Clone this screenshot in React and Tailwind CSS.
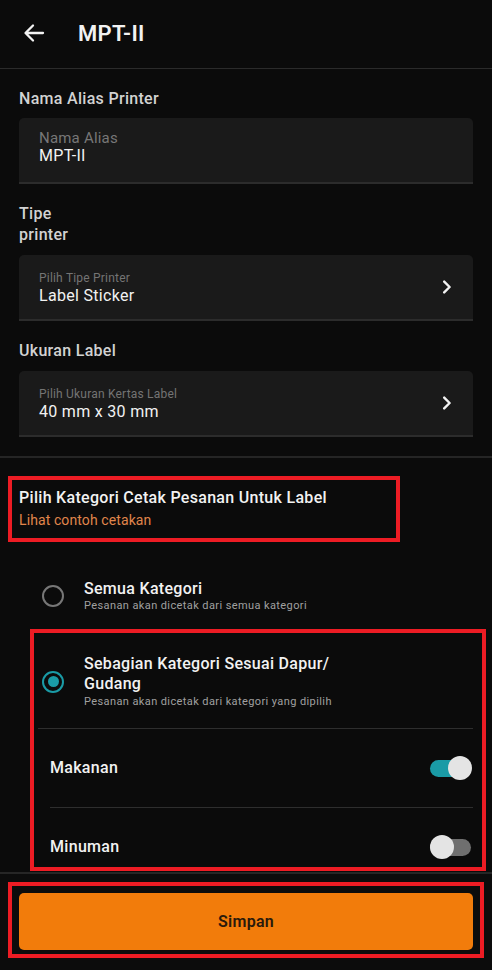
import React from 'react';

const ChevronRight = () => (
    <svg width="10" height="14" viewBox="0 0 10 14" fill="none" className="shrink-0">
        <path d="M2.2 1.6 L7.6 7 L2.2 12.4" stroke="#f2f2f2" strokeWidth="2.4" strokeLinecap="round" strokeLinejoin="round" />
    </svg>
);

const Toggle = ({ on }) => (
    <div className="relative w-[41px] h-[24px] flex items-center">
        <div className={`w-full h-[17px] rounded-full ${on ? 'bg-[#1a9ba6]' : 'bg-[#6f6f6f]'}`} />
        <div
            className={`absolute top-0 w-[24px] h-[24px] rounded-full bg-[#e4e4e4] ${on ? 'right-[-1px]' : 'left-0'}`}
        />
    </div>
);

const Radio = ({ checked }) => (
    <div
        className={`w-[22px] h-[22px] rounded-full shrink-0 flex items-center justify-center border-[2.5px] ${
            checked ? 'border-[#1a9ba6]' : 'border-[#777]'
        }`}
    >
        {checked && <div className="w-[11px] h-[11px] rounded-full bg-[#1a9ba6]" />}
    </div>
);

const SelectBox = ({ hint, value }) => (
    <div className="h-[66px] rounded-t-[5px] bg-[#1a1a1a] border-b-2 border-[#2c2c2c] flex items-center pl-[20px] pr-[21px]">
        <div className="flex-1 pt-[2px]">
            <div className="text-[12px] leading-[15px] text-[#747474] tracking-[0.2px]">{hint}</div>
            <div className="text-[16px] leading-[19px] text-[#f2f2f2] tracking-[0.3px]">{value}</div>
        </div>
        <ChevronRight />
    </div>
);

export default function App() {
    return (
        <div
            className="w-[492px] h-[970px] bg-[#0b0b0b] flex flex-col overflow-hidden"
            style={{ fontFamily: 'Roboto, "Noto Sans", sans-serif' }}
        >
            {/* Header */}
            <div className="h-[69px] shrink-0 flex items-center border-b border-[#2b2b2b] pb-[2px]">
                <svg width="22" height="22" viewBox="0 0 22 22" fill="none" className="ml-[23px]">
                    <path d="M20 11H3 M10 3.5 L2.5 11 L10 18.5" stroke="#f2f2f2" strokeWidth="2.3" strokeLinecap="round" strokeLinejoin="round" />
                </svg>
                <h1 className="ml-[33px] text-[22px] font-semibold text-[#f2f2f2] tracking-[0.3px]">MPT-II</h1>
            </div>

            {/* Scrollable content */}
            <div className="flex-1 overflow-hidden flex flex-col">
                <div className="px-[19px] pt-[19px]">
                    <div className="text-[16px] leading-[21px] font-medium text-[#d2d2d2] tracking-[0.3px] mb-[9px]">Nama Alias Printer</div>
                    <div className="h-[66px] rounded-t-[5px] bg-[#1a1a1a] border-b-2 border-[#2c2c2c] pl-[20px] pt-[11px]">
                        <div className="text-[15px] leading-[18px] text-[#777] tracking-[0.2px]">Nama Alias</div>
                        <div className="text-[16px] leading-[18px] text-[#f2f2f2] tracking-[0.3px]">MPT-II</div>
                    </div>

                    <div className="mt-[19px] text-[16px] leading-[21px] font-medium text-[#d2d2d2] tracking-[0.3px] mb-[10px]">
                        Tipe
                        <br />
                        printer
                    </div>
                    <SelectBox hint="Pilih Tipe Printer" value="Label Sticker" />

                    <div className="mt-[19px] text-[16px] leading-[21px] font-medium text-[#d2d2d2] tracking-[0.3px] mb-[10px]">Ukuran Label</div>
                    <SelectBox hint="Pilih Ukuran Kertas Label" value="40 mm x 30 mm" />
                </div>

                <div className="mt-[19px] h-[2px] bg-[#252525]" />

                {/* Kategori heading (annotated) */}
                <div className="mt-[18px] ml-[8px] w-[392px] border-4 border-[#ed1c24] pl-[7px] pt-[7px] pb-[9px]">
                    <div className="text-[16px] leading-[21px] font-medium text-[#f2f2f2] tracking-[0.3px]">
                        Pilih Kategori Cetak Pesanan Untuk Label
                    </div>
                    <div className="mt-[3px] text-[14px] leading-[18px] text-[#e0864c] tracking-[0.1px]">Lihat contoh cetakan</div>
                </div>

                {/* Semua kategori */}
                <div className="mt-[36px] pl-[42px] flex items-center gap-[20px]">
                    <Radio checked={false} />
                    <div>
                        <div className="text-[16px] leading-[21px] font-medium text-[#f2f2f2] tracking-[0.3px]">Semua Kategori</div>
                        <div className="text-[11px] leading-[14px] text-[#a0a0a0] tracking-[0.4px]">Pesanan akan dicetak dari semua kategori</div>
                    </div>
                </div>

                {/* Sebagian kategori (annotated) */}
                <div className="mt-[16px] ml-[30px] w-[456px] h-[242px] shrink-0 border-4 border-[#ed1c24] overflow-hidden">
                    <div className="pl-[8px] pt-[21px] flex items-center gap-[20px]">
                        <Radio checked />
                        <div>
                            <div className="text-[16px] leading-[20px] font-medium text-[#f2f2f2] tracking-[0.3px]">
                                Sebagian Kategori Sesuai Dapur/
                                <br />
                                Gudang
                            </div>
                            <div className="mt-[1px] text-[11px] leading-[14px] text-[#a0a0a0] tracking-[0.4px]">
                                Pesanan akan dicetak dari kategori yang dipilih
                            </div>
                        </div>
                    </div>
                    <div className="mt-[19px] ml-[4px] mr-[9px] h-[1px] bg-[#2e2e2e]" />
                    <div className="h-[78px] flex items-center justify-between pl-[16px] pr-[11px]">
                        <span className="text-[16px] font-medium text-[#f2f2f2] tracking-[0.3px]">Makanan</span>
                        <Toggle on />
                    </div>
                    <div className="ml-[16px] mr-[9px] h-[1px] bg-[#2e2e2e]" />
                    <div className="h-[78px] flex items-center justify-between pl-[16px] pr-[11px]">
                        <span className="text-[16px] font-medium text-[#f2f2f2] tracking-[0.3px]">Minuman</span>
                        <Toggle on={false} />
                    </div>
                </div>
            </div>

            {/* Bottom bar */}
            <div className="shrink-0 h-[98px] border-t-2 border-[#262626] bg-[#0c0c0c] pt-[8px]">
                <div className="ml-[8px] w-[476px] h-[76px] border-4 border-[#ed1c24] pl-[7px] pr-[7px] pt-[7px]">
                    <button className="w-full h-[57px] rounded-[5px] bg-[#f27c0b] text-[16px] font-semibold text-[#2a1a0c] tracking-[0.3px]">
                        Simpan
                    </button>
                </div>
            </div>
        </div>
    );
}
